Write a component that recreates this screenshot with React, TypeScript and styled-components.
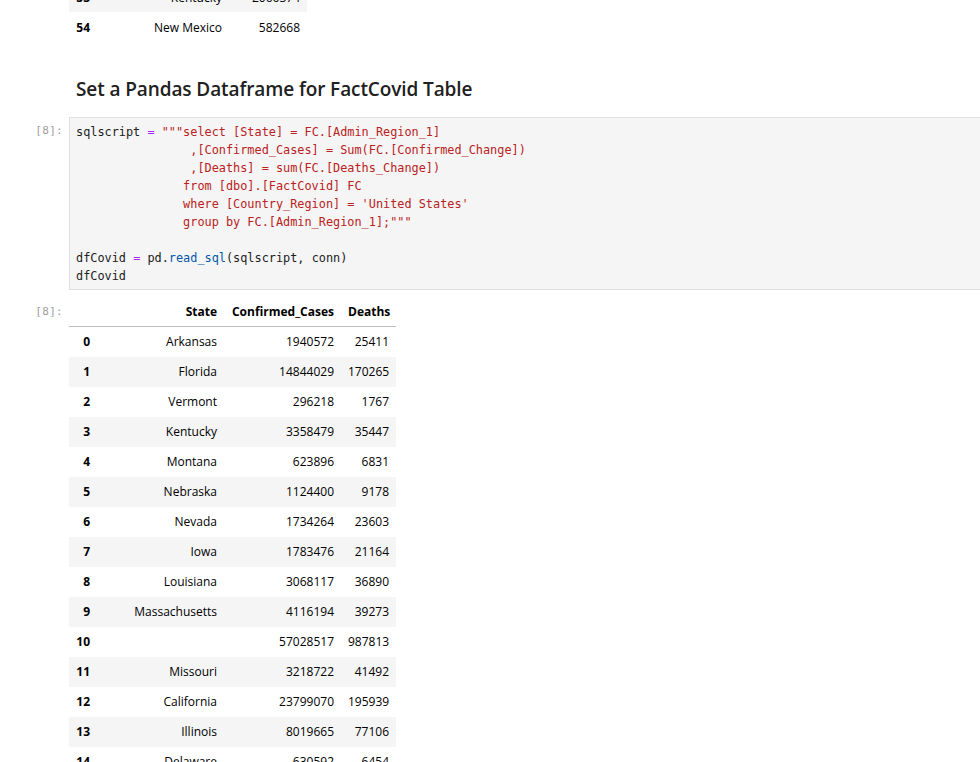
import React from "react";
import styled, { createGlobalStyle } from "styled-components";

const GlobalStyle = createGlobalStyle`
  html, body { margin: 0; padding: 0; background: #ffffff; }
  body { overflow: hidden; width: 980px; height: 762px; }
`;

const Notebook = styled.div`
  width: 1000px;
  margin-top: -18px;
  display: flex;
  flex-direction: column;
  font-family: "Open Sans", "Noto Sans", sans-serif;
  color: #000;
`;

const Cell = styled.div<{ $gap?: number }>`
  display: grid;
  grid-template-columns: 69px 1fr;
  align-items: start;
  justify-items: start;
  margin-top: ${(p) => p.$gap ?? 0}px;
`;

const Prompt = styled.div<{ $top: number }>`
  font-family: "DejaVu Sans Mono", "Liberation Mono", monospace;
  font-size: 11px;
  line-height: 18px;
  color: #9e9e9e;
  text-align: right;
  justify-self: stretch;
  padding-right: 6px;
  padding-top: ${(p) => p.$top}px;
  letter-spacing: 0.3px;
`;

const Heading = styled.h2`
  margin: 34px 0 15px 7px;
  font-family: "Open Sans", "Noto Sans", sans-serif;
  font-weight: 600;
  font-size: 19px;
  line-height: 26px;
  color: #212121;
  letter-spacing: -0.1px;
`;

const CodeBox = styled.pre`
  margin: 0;
  justify-self: stretch;
  background: #f5f5f5;
  border: 1px solid #e0e0e0;
  border-right: none;
  padding: 5px 6px 4px 6px;
  font-family: "DejaVu Sans Mono", "Liberation Mono", monospace;
  font-size: 11.86px;
  line-height: 18px;
  color: #212121;
  white-space: pre;
`;

const Op = styled.span`color: #aa22ff;`;
const Str = styled.span`color: #ba2121;`;
const Prop = styled.span`color: #0055aa;`;

const Table = styled.table<{ $w: number }>`
  border-collapse: collapse;
  table-layout: fixed;
  width: ${(p) => p.$w}px;
  font-size: 12px;
  color: #000;
`;

const Col = styled.col<{ $w: number }>`
  width: ${(p) => p.$w}px;
`;

const HeadCell = styled.th`
  height: 29px;
  padding: 0 7px;
  text-align: right;
  font-weight: 700;
  border-bottom: 1px solid #bdbdbd;
  white-space: nowrap;
`;

const Row = styled.tr<{ $odd: boolean }>`
  height: 30px;
  background: ${(p) => (p.$odd ? "#f5f5f5" : "#ffffff")};
`;

const IndexCell = styled.th`
  padding: 0 7px;
  text-align: right;
  font-weight: 700;
`;

const DataCell = styled.td`
  padding: 0 7px;
  text-align: right;
  white-space: nowrap;
`;

const covid: [string, number, number][] = [
  ["Arkansas", 1940572, 25411],
  ["Florida", 14844029, 170265],
  ["Vermont", 296218, 1767],
  ["Kentucky", 3358479, 35447],
  ["Montana", 623896, 6831],
  ["Nebraska", 1124400, 9178],
  ["Nevada", 1734264, 23603],
  ["Iowa", 1783476, 21164],
  ["Louisiana", 3068117, 36890],
  ["Massachusetts", 4116194, 39273],
  ["", 57028517, 987813],
  ["Missouri", 3218722, 41492],
  ["California", 23799070, 195939],
  ["Illinois", 8019665, 77106],
  ["Delaware", 630592, 6454],
];

export default function App() {
  return (
    <>
      <GlobalStyle />
      <Notebook>
        <Cell>
          <Prompt $top={0} />
          <Table $w={238}>
            <colgroup>
              <Col $w={28} />
              <Col $w={132} />
              <Col $w={78} />
            </colgroup>
            <tbody>
              <Row $odd>
                <IndexCell>53</IndexCell>
                <DataCell>Kentucky</DataCell>
                <DataCell>2066374</DataCell>
              </Row>
              <Row $odd={false}>
                <IndexCell>54</IndexCell>
                <DataCell>New Mexico</DataCell>
                <DataCell>582668</DataCell>
              </Row>
            </tbody>
          </Table>
        </Cell>

        <Cell>
          <div />
          <Heading>Set a Pandas Dataframe for FactCovid Table</Heading>
        </Cell>

        <Cell>
          <Prompt $top={5}>[8]:</Prompt>
          <CodeBox>
            sqlscript <Op>=</Op> <Str>{`"""select [State] = FC.[Admin_Region_1]
                ,[Confirmed_Cases] = Sum(FC.[Confirmed_Change])
                ,[Deaths] = sum(FC.[Deaths_Change])
               from [dbo].[FactCovid] FC
               where [Country_Region] = 'United States'
               group by FC.[Admin_Region_1];"""`}</Str>
            {"\n\n"}dfCovid <Op>=</Op> pd.<Prop>read_sql</Prop>(sqlscript, conn){"\n"}dfCovid
          </CodeBox>
        </Cell>

        <Cell $gap={7}>
          <Prompt $top={6}>[8]:</Prompt>
          <Table $w={327}>
            <colgroup>
              <Col $w={28} />
              <Col $w={127} />
              <Col $w={117} />
              <Col $w={55} />
            </colgroup>
            <thead>
              <tr>
                <HeadCell />
                <HeadCell>State</HeadCell>
                <HeadCell>Confirmed_Cases</HeadCell>
                <HeadCell>Deaths</HeadCell>
              </tr>
            </thead>
            <tbody>
              {covid.map(([state, cases, deaths], i) => (
                <Row key={i} $odd={i % 2 === 1}>
                  <IndexCell>{i}</IndexCell>
                  <DataCell>{state}</DataCell>
                  <DataCell>{cases}</DataCell>
                  <DataCell>{deaths}</DataCell>
                </Row>
              ))}
            </tbody>
          </Table>
        </Cell>
      </Notebook>
    </>
  );
}
